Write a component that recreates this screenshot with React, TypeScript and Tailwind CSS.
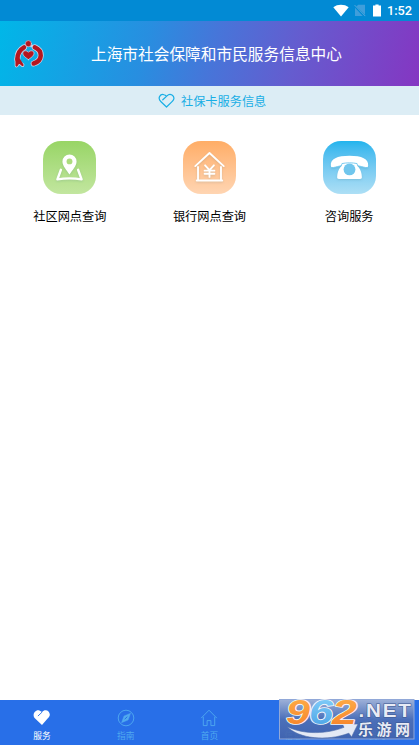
import React from "react";

function Emblem() {
  return (
    <svg className="ml-[14px] block h-[30px] w-[30px]" viewBox="0 0 30 30" fill="none" strokeLinecap="round" strokeLinejoin="round">
      <g stroke="#c9d8ee">
        <path d="M10 8.4C5.6 11 3.2 15 3.4 20.5M20.8 8.3c8.1 3.6 8.1 13.3-1.1 16.2" strokeWidth="6" />
        <path d="M2.6 19.5v7l2.3-3.3 3.6 2.8" strokeWidth="3.8" />
        <path d="M11.3 6.8c1.5-.6 4.8-.6 6.4 0" strokeWidth="3" />
      </g>
      <g stroke="#b5161f">
        <path d="M10 8.4C5.6 11 3.2 15 3.4 20.5M20.8 8.3c8.1 3.6 8.1 13.3-1.1 16.2" strokeWidth="4.5" />
        <path d="M2.6 19.5v7l2.3-3.6 3.6 3.1-3.4-5.5" fill="#b5161f" strokeWidth="2.3" />
      </g>
      <circle cx="14.4" cy="4.7" r="3.1" fill="#b5161f" stroke="#c9d8ee" strokeWidth=".6" />
      <path d="M14.4 20.6c-2.8-2-6.2-4.2-5.5-7.1.8-2.4 4.2-2.1 5.5-.2 1.3-1.9 4.7-2.2 5.5.2.7 2.9-2.7 5.1-5.5 7.1Z" fill="#b5161f" stroke="#c9d8ee" strokeWidth=".8" />
    </svg>
  );
}

function StatusBar() {
  return (
    <div className="flex h-[21px] items-center bg-[#028ad4] pl-[333px] text-white">
      <svg className="h-[13px] w-[16px]" viewBox="0 0 16 13">
        <path d="M.3 3.2C4.5-.1 11.4-.1 15.7 3.2L8 12.5Z" fill="currentColor" />
      </svg>
      <svg className="ml-[5px] h-[13px] w-[12px]" viewBox="0 0 12 13">
        <path d="M4.2.8H11v10L2.4 2.5ZM1 3.8l7.8 8.2H1Z" fill="#3f9edb" />
        <path d="M.6 1.1l10.7 11" stroke="#58a9dc" />
      </svg>
      <svg className="ml-[7px] h-[13px] w-[8px]" viewBox="0 0 8 13">
        <path d="M2.4.5h3.2v1H8v11H0v-11h2.4Z" fill="currentColor" />
      </svg>
      <span className="ml-[6px] pt-px font-['Roboto',sans-serif] text-[12.7px] leading-[20px] font-medium">1:52</span>
    </div>
  );
}

function MapIcon() {
  return (
    <g fill="none" stroke="white" strokeWidth="2.5" strokeLinecap="round" strokeLinejoin="round">
      <path d="M18.2 29.4l-3.5 9.7q12.3-2 24.6 0l-3.5-9.7" />
      <path d="M27 34.2c-2.8-4.2-7.2-8.8-7.2-13.2a7.2 7.2 0 0 1 14.4 0c0 4.4-4.4 9-7.2 13.2Z" fill="white" stroke="none" />
      <circle cx="27" cy="20.8" r="3" fill="#acdc7e" stroke="none" />
    </g>
  );
}

function BankIcon() {
  return (
    <g fill="none" stroke="white" strokeWidth="1.9" strokeLinecap="round" strokeLinejoin="round">
      <path d="M12.5 25.6L27 12.2l14.5 13.4M15.3 26.5V39.8M38.7 26.5V39.8M14 40.2h26" />
      <path d="M22.5 24.8l4.5 5 4.5-5M22 30.2h10M22 33.4h10M27 30v6.6" strokeWidth="1.9" />
    </g>
  );
}

function PhoneIcon() {
  return (
    <g>
      <path d="M8 25.2c-.7-7.1 6.5-10.2 19-10.2s19.7 3.1 19 10.2c-.2 1.7-1.3 2.1-2.8 1.7l-6.6-1.5c-1.2-.3-1.9-1-2.1-2.5-4.5-.9-10.5-.9-15 0-.2 1.5-.9 2.2-2.1 2.5l-6.6 1.5c-1.5.4-2.6 0-2.8-1.7Z" fill="white" />
      <path d="M19.3 20.5v4c0 1.2-.9 1.6-1.8 2.5-1.9 2.3-3 6-3.1 9.7 0 1.4.5 2 1.8 2h21.6c1.3 0 1.8-.6 1.8-2-.1-3.7-1.2-7.4-3.1-9.7-.9-.9-1.8-1.3-1.8-2.5v-4Z" fill="white" />
      <circle cx="27" cy="29" r="6" fill="#70c6ed" />
      <path d="M8.5 27.1c2.8.2 5.5-1 8.6-1.6 1.4-.3 2-1.1 2.2-2.5 4.6-1 10.8-1 15.4 0 .2 1.4.8 2.2 2.2 2.5 3.1.6 5.8 1.8 8.6 1.6" fill="none" stroke="#6bc5ee" strokeWidth=".9" />
    </g>
  );
}

function Service({ label, colors, children }: { label: string; colors: string; children: React.ReactNode }) {
  return (
    <button className="flex flex-col items-center text-black">
      <div className={`h-[53px] w-[53px] rounded-[18px] bg-gradient-to-b ${colors}`}>
        <svg className="h-[53px] w-[53px] drop-shadow-[0_1px_1px_rgba(50,110,130,0.18)]" viewBox="0 0 54 54">{children}</svg>
      </div>
      <span className="mt-[13px] text-[12.2px] leading-[18px]">{label}</span>
    </button>
  );
}

function Watermark() {
  return (
    <svg className="absolute top-[-2px] left-[279px] h-[43px] w-[136px] overflow-visible" viewBox="0 0 136 43">
      <defs>
        <linearGradient id="panel" x1="0" y1="0" x2="0" y2="1">
          <stop stopColor="#aab8d6" stopOpacity=".9" />
          <stop offset=".5" stopColor="#4f6fb4" stopOpacity=".9" />
          <stop offset="1" stopColor="#4463a9" stopOpacity=".88" />
        </linearGradient>
        <linearGradient id="orange" x1="0" y1="0" x2="0" y2="1">
          <stop stopColor="#ffb24c" /><stop offset="1" stopColor="#f58028" />
        </linearGradient>
        <linearGradient id="blue" x1="0" y1="0" x2="0" y2="1">
          <stop stopColor="#8bd4fc" /><stop offset="1" stopColor="#469fe4" />
        </linearGradient>
      </defs>
      <rect x=".5" y="1.5" width="134.5" height="39.5" fill="url(#panel)" stroke="#91a8d8" />
      <path d="M8 28.5c17 8.5 40 7.5 57 .8l-1.5-3L79 26l-6.5 13-2.6-3.8C48 43.5 20 41 8 28.5Z" fill="#e4e9f5" stroke="#4969a8" strokeWidth=".6" />
      <g fontFamily="Liberation Sans, sans-serif" fontSize="34.5" fontWeight="700" fontStyle="italic" stroke="#f6f7fa" strokeWidth="1.7" paintOrder="stroke" strokeLinejoin="round">
        <text x="7" y="25.5" textLength="24" lengthAdjust="spacingAndGlyphs" fill="url(#orange)">9</text>
        <text x="30" y="25.5" textLength="24" lengthAdjust="spacingAndGlyphs" fill="url(#blue)">6</text>
        <text x="53" y="25.5" textLength="25" lengthAdjust="spacingAndGlyphs" fill="url(#orange)">2</text>
      </g>
      <g fill="#e8ebf5" stroke="#3c568d" strokeWidth="1" paintOrder="stroke">
        <text x="79.5" y="19" fontFamily="Liberation Sans, sans-serif" fontSize="17.5" fontWeight="700" letterSpacing="1.5" textLength="54" lengthAdjust="spacingAndGlyphs">.NET</text>
        <text x="79" y="37" fontFamily="Noto Sans CJK SC, sans-serif" fontSize="15" fontWeight="700" textLength="52">乐游网</text>
      </g>
    </svg>
  );
}

function HeartTab() {
  return (
    <svg className="h-[17px] w-[18px]" viewBox="0 0 18 17">
      <path d="M9 16L2.1 9.5C-1.8 5.8 2.7-.4 6.8 1.7L9 3.1c3.6-4.2 8.6-.3 7.7 3.4-.5 1.5-1.3 2.2-2.1 3.1Z" fill="white" />
      <path d="M9 3.2L5.2 6.8" stroke="#286fe4" strokeWidth=".9" strokeLinecap="round" />
    </svg>
  );
}

function CompassTab() {
  return (
    <svg className="h-[18px] w-[18px]" viewBox="0 0 18 18" fill="none" stroke="currentColor">
      <circle cx="9" cy="9" r="7.8" strokeWidth=".9" />
      <path d="M13.6 4.2L11.1 11 4.5 13.8 7 7Z" fill="currentColor" strokeWidth=".4" />
      <path d="M7.7 10.2l2.6-2.5" stroke="#286fe4" />
    </svg>
  );
}

function HomeTab() {
  return (
    <svg className="h-[18px] w-[18px]" viewBox="0 0 18 18" fill="none" stroke="currentColor" strokeWidth=".9">
      <path d="M1.2 9.1L9 1.2l7.8 7.9M3.3 7.8v8.8h3.8v-5h3.8v5h3.8V7.8" />
    </svg>
  );
}

function MessageTab() {
  return (
    <svg className="h-[18px] w-[18px]" viewBox="0 0 18 18" fill="none" stroke="currentColor" strokeWidth=".9">
      <path d="M2 3h14v10H9l-3 3v-3H2Z" />
    </svg>
  );
}

function ProfileTab() {
  return (
    <svg className="h-[18px] w-[18px]" viewBox="0 0 18 18" fill="none" stroke="currentColor" strokeWidth=".9">
      <circle cx="9" cy="5.5" r="4" />
      <path d="M2 17c0-9 14-9 14 0" />
    </svg>
  );
}

export default function App() {
  return (
    <main className="flex h-[745px] w-[419px] flex-col overflow-hidden bg-white font-['Noto_Sans_CJK_SC',sans-serif]">
      <StatusBar />
      <header className="grid h-[65px] grid-cols-[91px_1fr] items-center bg-[linear-gradient(105deg,#00b7e8_0%,#288ee0_35%,#4775d9_51%,#655ccf_70%,#8536c2_100%)] text-white">
        <Emblem />
        <h1 className="text-[15.7px] leading-[24px] font-normal whitespace-nowrap">上海市社会保障和市民服务信息中心</h1>
      </header>
      <div className="flex h-[29px] items-center bg-[#dcedf5] pl-[158px] text-[#18aee5]">
        <svg className="h-[16px] w-[17px]" viewBox="0 0 17 16" fill="none" stroke="currentColor" strokeWidth="1.2" strokeLinecap="round" strokeLinejoin="round">
          <path d="M4.8 6.8L9 2.9c3.2-3.7 8-.1 6.6 3.6-.4 1-1.1 1.7-1.8 2.4L8.5 14 3 8.7C-1 5 2.5.5 6 1.7c1 .3 1.5.8 2.2 1.2" />
        </svg>
        <span className="ml-[6px] text-[12.2px] leading-[18px]">社保卡服务信息</span>
      </div>
      <section className="grid flex-1 grid-cols-3 items-start pt-[26px]">
        <Service label="社区网点查询" colors="from-[#98d565] to-[#c2e69f]"><MapIcon /></Service>
        <Service label="银行网点查询" colors="from-[#ffad66] to-[#ffd5b2]"><BankIcon /></Service>
        <Service label="咨询服务" colors="from-[#1fb4ed] to-[#addff5]"><PhoneIcon /></Service>
      </section>
      <nav className="relative grid h-[45px] grid-cols-5 bg-[#286fe8] text-[8.7px] leading-[13px] text-[#50aaef]">
        <div className="flex flex-col items-center pt-[9px] text-white"><HeartTab /><span className="mt-[3px]">服务</span></div>
        <div className="flex flex-col items-center pt-[9px]"><CompassTab /><span className="mt-[2px]">指南</span></div>
        <div className="flex flex-col items-center pt-[9px]"><HomeTab /><span className="mt-[2px]">首页</span></div>
        <div className="flex flex-col items-center pt-[9px]"><MessageTab /><span className="mt-[2px]">信息</span></div>
        <div className="flex flex-col items-center pt-[9px]"><ProfileTab /><span className="mt-[2px]">我的</span></div>
        <Watermark />
      </nav>
    </main>
  );
}
